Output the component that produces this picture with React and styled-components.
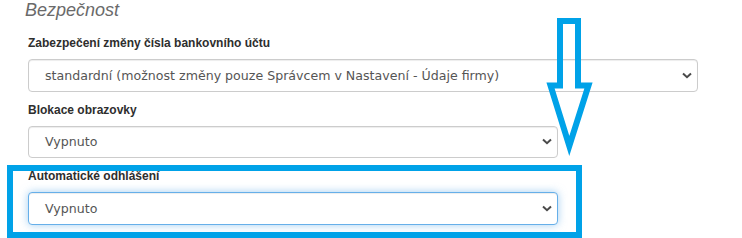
import React from 'react';
import styled, { createGlobalStyle } from 'styled-components';

const GlobalStyle = createGlobalStyle`
  html, body {
    margin: 0;
    padding: 0;
    background: #fff;
  }
`;

const Page = styled.div`
  position: relative;
  width: 742px;
  height: 238px;
  overflow: hidden;
  font-family: "Liberation Sans", Arial, sans-serif;
`;

const Heading = styled.h3`
  margin: 0 0 16px 25px;
  font-size: 18px;
  line-height: 20px;
  font-weight: normal;
  font-style: italic;
  color: #6a6a6a;
`;

const Form = styled.div`
  padding-left: 28px;
`;

const Group = styled.div`
  margin-bottom: 11px;
`;

const Label = styled.div`
  font-size: 12px;
  line-height: 15px;
  font-weight: bold;
  color: #2e2e2e;
  margin-bottom: 8px;
`;

const SelectBox = styled.div`
  box-sizing: border-box;
  display: flex;
  align-items: center;
  justify-content: space-between;
  width: ${(p) => p.$width}px;
  height: 32.5px;
  padding: 0 5px 0 16px;
  border: 1px solid ${(p) => (p.$focused ? '#66afe9' : '#ccc')};
  border-radius: 4px;
  background: #fff;
  box-shadow: ${(p) =>
    p.$focused
      ? 'inset 0 1px 1px rgba(0,0,0,.075), 0 0 8px rgba(102,175,233,.6)'
      : 'inset 0 1px 1px rgba(0,0,0,.075)'};
  font-family: "DejaVu Sans", Verdana, sans-serif;
  font-size: 12.6px;
  color: #555;
`;

const Chevron = () => (
  <svg width="10" height="7" viewBox="0 0 10 7">
    <path d="M1 1.5 L5 5.2 L9 1.5" fill="none" stroke="#4a4a4a" strokeWidth="2" />
  </svg>
);

// annotation overlays drawn over the form
const Highlight = styled.div`
  position: absolute;
  left: 7px;
  top: 165px;
  width: 575px;
  height: 73px;
  box-sizing: border-box;
  border: 6px solid #00a2e8;
`;

const ArrowSvg = styled.svg`
  position: absolute;
  left: 0;
  top: 0;
`;

const Select = ({ value, width, focused }) => (
  <SelectBox $width={width} $focused={focused}>
    <span>{value}</span>
    <Chevron />
  </SelectBox>
);

export default function App() {
  return (
    <Page>
      <GlobalStyle />
      <Heading>Bezpečnost</Heading>
      <Form>
        <Group>
          <Label>Zabezpečení změny čísla bankovního účtu</Label>
          <Select
            width={670}
            value="standardní (možnost změny pouze Správcem v Nastavení - Údaje firmy)"
          />
        </Group>
        <Group>
          <Label>Blokace obrazovky</Label>
          <Select width={530} value="Vypnuto" />
        </Group>
        <Group>
          <Label>Automatické odhlášení</Label>
          <Select width={530} value="Vypnuto" focused />
        </Group>
      </Form>
      <Highlight />
      <ArrowSvg width="742" height="238">
        <polygon
          points="560,85.5 560,21 578,21 578,85.5 588.5,85.5 569.3,146 550.5,85.5"
          fill="none"
          stroke="#00a2e8"
          strokeWidth="6"
          strokeLinejoin="miter"
          strokeMiterlimit="10"
        />
      </ArrowSvg>
    </Page>
  );
}
